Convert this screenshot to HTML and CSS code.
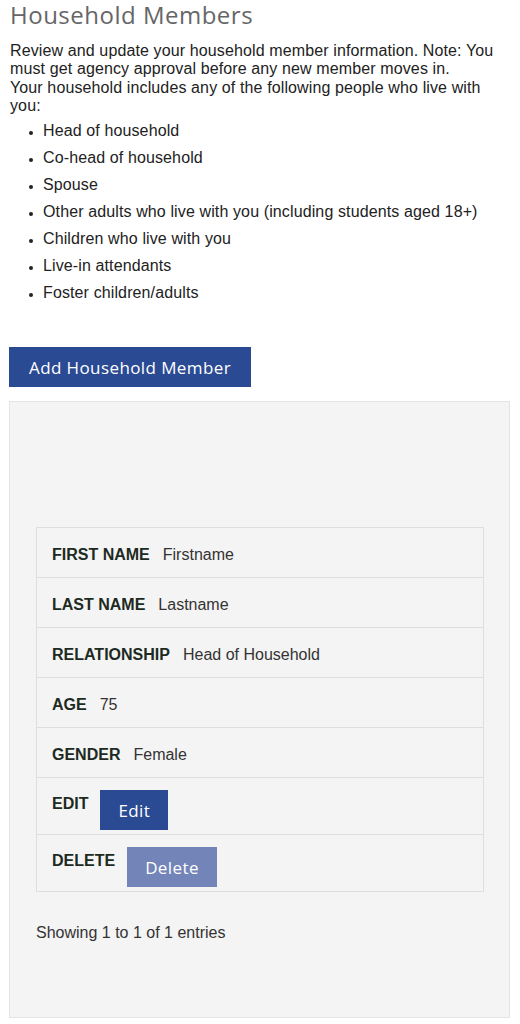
FILE: index.html
```html
<!DOCTYPE html>
<html lang="en">
<head>
<meta charset="utf-8">
<title>Household Members</title>
<link rel="stylesheet" href="styles.css">
</head>
<body>
<main class="page">
  <h1 class="title">Household Members</h1>
  <p class="intro">Review and update your household member information. Note: You must get agency approval before any new member moves in.<br>Your household includes any of the following people who live with you:</p>
  <ul class="people">
    <li>Head of household</li>
    <li>Co-head of household</li>
    <li>Spouse</li>
    <li>Other adults who live with you (including students aged 18+)</li>
    <li>Children who live with you</li>
    <li>Live-in attendants</li>
    <li>Foster children/adults</li>
  </ul>
  <button class="btn btn-add" type="button">Add Household Member</button>
  <section class="panel">
    <div class="table">
      <div class="row"><span class="label">FIRST NAME</span><span class="value">Firstname</span></div>
      <div class="row"><span class="label">LAST NAME</span><span class="value">Lastname</span></div>
      <div class="row"><span class="label">RELATIONSHIP</span><span class="value">Head of Household</span></div>
      <div class="row"><span class="label">AGE</span><span class="value">75</span></div>
      <div class="row"><span class="label">GENDER</span><span class="value">Female</span></div>
      <div class="row row-action"><span class="label">EDIT</span><button class="btn btn-small" type="button">Edit</button></div>
      <div class="row row-action"><span class="label">DELETE</span><button class="btn btn-small btn-disabled" type="button">Delete</button></div>
    </div>
    <p class="info">Showing 1 to 1 of 1 entries</p>
  </section>
</main>
</body>
</html>
```

FILE: styles.css
```css
* { box-sizing: border-box; }
html, body { margin: 0; padding: 0; background: #fff; }
body { font-family: "Liberation Sans", Arial, sans-serif; color: #222; }

.page { padding: 0 10px 0 9px; }

.title {
  margin: 0;
  padding-left: 1px;
  font-family: "Open Sans", sans-serif;
  font-weight: 400;
  font-size: 24px;
  line-height: 29px;
  letter-spacing: 0.5px;
  color: #666;
}

.intro {
  margin: 13px 0 0 1px;
  font-size: 16px;
  line-height: 18.3px;
  letter-spacing: 0.12px;
  color: #222;
}

.people {
  margin: 7px 0 0;
  padding-left: 34px;
  font-size: 16px;
  line-height: 18px;
  letter-spacing: 0.12px;
  color: #222;
}
.people li { margin-bottom: 9px; }
.people li::marker { font-size: 12px; }

.btn {
  border: 0;
  border-radius: 0;
  background: #2a4a93;
  color: #fff;
  font-family: "Open Sans", sans-serif;
  font-size: 17px;
  letter-spacing: 0.4px;
  cursor: pointer;
}

.btn-add {
  display: block;
  margin-top: 45px;
  width: 242px;
  height: 40px;
  padding: 0;
}

.panel {
  margin-top: 14px;
  width: 501px;
  background: #f4f4f4;
  border: 1px solid #e4e4e4;
  padding: 125px 25px 75px 26px;
}

.table {
  width: 448px;
  border: 1px solid #dedede;
  border-bottom: 0;
}

.row {
  display: flex;
  align-items: baseline;
  gap: 13px;
  height: 50px;
  padding: 17px 15px 0;
  border-bottom: 1px solid #dedede;
  line-height: 20px;
}

.label {
  font-weight: 700;
  font-size: 16px;
  color: #1c2a22;
}

.value {
  font-size: 16px;
  color: #333;
}

.row-action {
  align-items: flex-start;
  gap: 12px;
  height: 57px;
  padding-top: 12px;
}
.row-action .label { margin-top: 4px; }

.btn-small {
  height: 40px;
  padding: 0 18px;
}
.btn-disabled { background: #7384b8; }

.info {
  margin: 32px 0 0;
  font-size: 16px;
  line-height: 18px;
  color: #333;
}
```
